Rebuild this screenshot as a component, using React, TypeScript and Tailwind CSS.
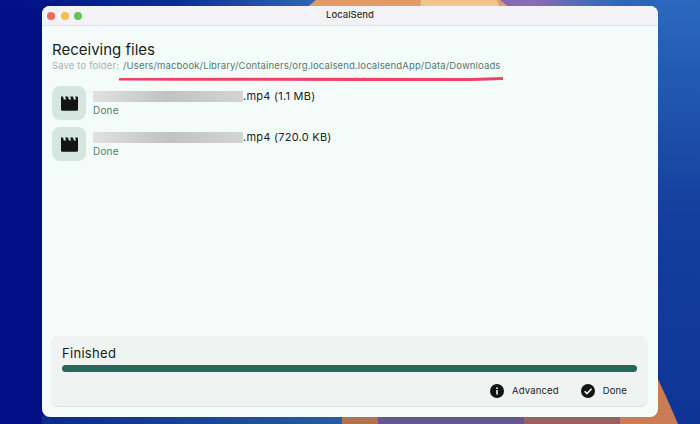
const font = "font-['Inter','Noto_Sans',sans-serif]";

const files = [
  { suffix: ".mp4", size: "(1.1 MB)" },
  { suffix: ".mp4", size: "(720.0 KB)" },
];

const Wallpaper = () => (
  <svg className="absolute inset-0" width="700" height="424" viewBox="0 0 700 424">
    <defs>
      <linearGradient id="sky" x1="0" x2="1" y1="0" y2="0">
        <stop offset="0" stopColor="#020f85" />
        <stop offset="0.25" stopColor="#0b2d96" />
        <stop offset="0.43" stopColor="#2a62b4" />
        <stop offset="0.76" stopColor="#8a6cb4" />
        <stop offset="0.88" stopColor="#2c68bb" />
        <stop offset="1" stopColor="#2562b8" />
      </linearGradient>
      <linearGradient id="right" x1="0" x2="0" y1="0" y2="1">
        <stop offset="0" stopColor="#2b69bd" />
        <stop offset="0.5" stopColor="#143f9e" />
        <stop offset="1" stopColor="#0e3596" />
      </linearGradient>
      <linearGradient id="floor" x1="0" x2="1" y1="0" y2="0">
        <stop offset="0" stopColor="#0a2a86" />
        <stop offset="1" stopColor="#2a5c9c" />
      </linearGradient>
    </defs>
    <rect width="700" height="424" fill="#020f85" />
    <rect width="700" height="8" fill="url(#sky)" />
    <rect x="655" width="45" height="424" fill="url(#right)" />
    <path d="M316 0 L500 0 L510 8 L306 8 Z" fill="#e69a63" />
    <path d="M421 0 L497 0 L500 8 L420 8 Z" fill="#efc58c" />
    <rect x="42" y="416" width="300" height="8" fill="url(#floor)" />
    <rect x="342" y="416" width="38" height="8" fill="#b0734f" />
    <rect x="378" y="416" width="146" height="8" fill="#65588f" />
    <rect x="524" y="416" width="110" height="8" fill="#96635f" />
    <path d="M657 377 Q668 400 678 424 L620 424 L620 377 Z" fill="#c97c55" />
  </svg>
);

const ClapperIcon = () => (
  <svg width="19" height="15" viewBox="0 0 19 15" fill="#141414">
    <path d="M1 .5 3 .5 3.8 3.5 6 3.5 5.2 .5 8 .5 8.8 3.5 11 3.5 10.2 .5 13 .5 13.8 3.5 16 3.5 15.2 .5 17 .5Q18 .5 18 1.5L18 13.5Q18 14.8 16.8 14.8L2.2 14.8Q1 14.8 1 13.5Z" />
  </svg>
);

const InfoIcon = () => (
  <svg width="14" height="14" viewBox="0 0 14 14">
    <circle cx="7" cy="7" r="7" fill="#141414" />
    <rect x="6.2" y="6" width="1.6" height="4.5" fill="#eff3f1" />
    <rect x="6.2" y="3.4" width="1.6" height="1.6" fill="#eff3f1" />
  </svg>
);

const CheckIcon = () => (
  <svg width="14" height="14" viewBox="0 0 14 14">
    <circle cx="7" cy="7" r="7" fill="#141414" />
    <path d="M3.6 7.2 6 9.6 10.6 4.8" fill="none" stroke="#eff3f1" strokeWidth="1.6" />
  </svg>
);

const FileRow = ({ suffix, size }: { suffix: string; size: string }) => (
  <div className="flex items-center gap-[7px]">
    <div className="w-[34px] h-[34px] rounded-lg bg-[#d5e6e1] flex items-center justify-center">
      <ClapperIcon />
    </div>
    <div className="flex flex-col pb-[1px]">
      <div className="flex items-center h-[16px]">
        <div className="w-[150px] h-[11px] bg-gradient-to-r from-[#dfe2e1] via-[#c0c3c2] to-[#d2d5d4]" />
        <span className="text-[11px] tracking-[0.25px] text-[#222] whitespace-pre">{suffix} {size}</span>
      </div>
      <span className="text-[10px] tracking-[0.2px] leading-[13px] text-[#4f7a6f]">Done</span>
    </div>
  </div>
);

export default function App() {
  return (
    <div className={`relative w-[700px] h-[424px] overflow-hidden pt-[6px] pl-[42px] ${font}`}>
      <Wallpaper />
      <div className="relative w-[616px] h-[411px] rounded-lg overflow-hidden bg-[#f4fcfa] flex flex-col">
        {/* Title bar */}
        <div className="relative h-[20px] bg-[#f3f2f6] border-b border-[#e3e5e6] flex items-center justify-center shrink-0">
          <div className="absolute left-[5px] flex gap-[5.7px]">
            <div className="w-[8px] h-[8px] rounded-full bg-[#ec6a5e]" />
            <div className="w-[8px] h-[8px] rounded-full bg-[#f4bf4f]" />
            <div className="w-[8px] h-[8px] rounded-full bg-[#61c554]" />
          </div>
          <span className="text-[9.5px] font-medium text-[#333]">LocalSend</span>
        </div>

        {/* Content */}
        <div className="flex-1 flex flex-col px-[10px] pt-[14px] pb-[10px]">
          <h1 className="text-[15px] leading-[20px] text-[#1c1c1c]">Receiving files</h1>
          <div className="flex gap-[4px] text-[9.5px] leading-[13px] tracking-[0.14px] mt-[-1px] whitespace-nowrap">
            <span className="text-[#aab3b0]">Save to folder:</span>
            <span className="text-[#4f7a6f]">/Users/macbook/Library/Containers/org.localsend.localsendApp/Data/Downloads</span>
          </div>
          <div className="flex flex-col gap-[7px] mt-[14px]">
            {files.map((file) => (
              <FileRow key={file.size} suffix={file.suffix} size={file.size} />
            ))}
          </div>

          {/* Progress panel */}
          <div className="mt-auto ml-[-1px] w-[597px] h-[71px] rounded-lg bg-[#eff3f1] border-b border-[#dfe3e1] px-[11px] pt-[9px] flex flex-col">
            <span className="text-[13px] leading-[17px] tracking-[0.3px] text-[#1c1c1c]">Finished</span>
            <div className="h-[7px] mt-[3px] rounded-full bg-[#236a5b]" />
            <div className="flex justify-end items-center gap-[22px] mt-[12px] pr-[10px] text-[9.5px] tracking-[0.15px] text-[#222]">
              <div className="flex items-center gap-[8px]">
                <InfoIcon />
                <span>Advanced</span>
              </div>
              <div className="flex items-center gap-[8px]">
                <CheckIcon />
                <span>Done</span>
              </div>
            </div>
          </div>
        </div>
      </div>

      {/* Red underline drawn over the screenshot */}
      <svg className="absolute left-0 top-0 pointer-events-none" width="700" height="424">
        <path d="M119 78 Q300 77.5 472 78 L503 77 L503 80 L472 81 Q300 81 119 80.5 Z" fill="#ee4464" />
      </svg>
    </div>
  );
}
